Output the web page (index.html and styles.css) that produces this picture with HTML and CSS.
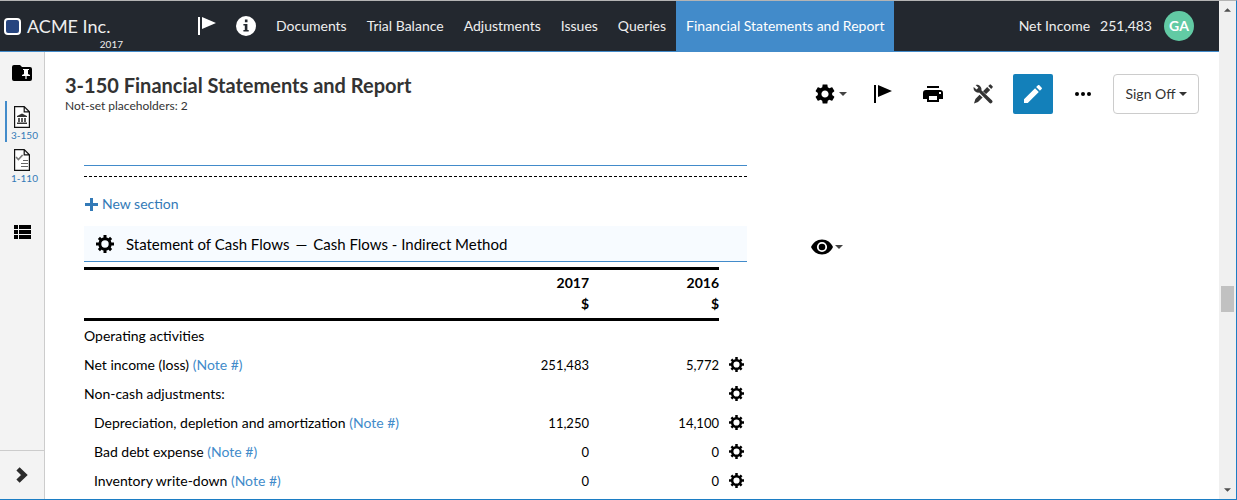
FILE: index.html
```html
<!DOCTYPE html>
<html lang="en">
<head>
<meta charset="utf-8">
<title>Financial Statements and Report</title>
<link rel="stylesheet" href="styles.css">
</head>
<body>
<svg class="defs" aria-hidden="true">
  <symbol id="cog" viewBox="0 0 18 18">
    <circle cx="9" cy="9" r="5.2" fill="none" stroke="currentColor" stroke-width="3"/>
    <path d="M9 0v4M9 14v4M0 9h4M14 9h4M2.9 2.9l2.6 2.6M12.5 12.5l2.6 2.6M15.1 2.9l-2.6 2.6M5.5 12.5l-2.6 2.6" stroke="currentColor" stroke-width="3"/>
  </symbol>
  <symbol id="flag" viewBox="0 0 18 18">
    <path d="M0 0h2v18H0zM4 0l14 6L4 12z" fill="currentColor"/>
  </symbol>
  <symbol id="caret" viewBox="0 0 8 4">
    <path d="M0 0h8L4 4z" fill="currentColor"/>
  </symbol>
</svg>
<div class="window">
  <div class="app">
    <header class="topbar">
      <a class="brand" href="#">
        <span class="brand-name"><span class="brand-mark"></span>ACME Inc.</span>
        <span class="brand-year">2017</span>
      </a>
      <button class="bar-icon" aria-label="Flag"><svg width="18" height="18"><use href="#flag"/></svg></button>
      <button class="bar-icon" aria-label="Information">
        <svg width="20" height="20" viewBox="0 0 20 20"><circle cx="10" cy="10" r="10" fill="#fff"/><path d="M8.9 3.6h2.6v2.6H8.9zM7.4 7.9h4v6.2h1.3v1.5H7.4v-1.5h1.4V9.4H7.4z" fill="#23282f"/></svg>
      </button>
      <nav class="tabs">
        <a href="#">Documents</a>
        <a href="#">Trial Balance</a>
        <a href="#">Adjustments</a>
        <a href="#">Issues</a>
        <a href="#">Queries</a>
        <a href="#" class="active" aria-current="page">Financial Statements and Report</a>
      </nav>
      <div class="income"><span>Net Income</span><span>251,483</span></div>
      <button class="avatar" aria-label="Account GA">GA</button>
    </header>

    <div class="body">
      <aside class="sidebar">
        <button class="side-icon" aria-label="Pinned documents">
          <svg width="20" height="16" viewBox="0 0 20 16"><path d="M2 0h6l2 2h8a2 2 0 0 1 2 2v10a2 2 0 0 1-2 2H2a2 2 0 0 1-2-2V2a2 2 0 0 1 2-2z" fill="#000"/><path d="M11 4h6v1h-1v4l2 1v1h-3.4v3h-1.2v-3H10v-1l2-1V5h-1z" fill="#fff"/></svg>
        </button>
        <a class="doc current" href="#">
          <svg width="16" height="22" viewBox="0 0 16 22"><path d="M.6.6h9.6l5.2 5.2v15.6H.6zM10.2.6v5.2h5.2" fill="#fff" stroke="#111" stroke-width="1.2"/><path d="M8 7.4l5 2.6v1H3v-1zM4.2 12h1.6v4H4.2zM7.2 12h1.6v4H7.2zM10.2 12h1.6v4h-1.6zM3 16.6h10v1.4H3z" fill="#333"/></svg>
          <span>3-150</span>
        </a>
        <a class="doc" href="#">
          <svg width="16" height="22" viewBox="0 0 16 22"><path d="M.6.6h9.6l5.2 5.2v15.6H.6zM10.2.6v5.2h5.2" fill="#fff" stroke="#111" stroke-width="1.2"/><path d="M2 8l2.4 2.6L8.600 6" fill="none" stroke="#777" stroke-width="1.6"/><path d="M9 11.500h5M7 14.500h7M7 17.500h7" stroke="#666" stroke-width="1.200"/></svg>
          <span>1-110</span>
        </a>
        <button class="side-icon list" aria-label="List">
          <svg width="17" height="14" viewBox="0 0 17 14"><path d="M0 0h4v4H0zM5 0h12v4H5zM0 5h4v4H0zM5 5h12v4H5zM0 10h4v4H0zM5 10h12v4H5z"/></svg>
        </button>
        <button class="expand" aria-label="Expand sidebar">
          <svg width="12" height="16" viewBox="0 0 12 16"><path d="M2 1.800L8.400 8 2 14.200" fill="none" stroke="#2b2b2b" stroke-width="4.600"/></svg>
        </button>
      </aside>

      <main class="main">
        <div class="head">
          <div class="titles">
            <h1>3-150 Financial Statements and Report</h1>
            <p>Not-set placeholders: 2</p>
          </div>
          <div class="tools">
            <button class="tool" aria-label="Settings">
              <svg width="24" height="24" viewBox="0 0 24 24"><path d="M19.140 12.940c.04-.3.06-.61.06-.94 0-.32-.02-.64-.07-.94l2.030-1.580c.18-.14.23-.41.12-.61l-1.920-3.320c-.12-.22-.37-.29-.59-.22l-2.390.96c-.5-.38-1.030-.7-1.620-.94l-.36-2.540c-.04-.24-.24-.41-.48-.41h-3.840c-.24 0-.43.17-.47.41l-.36 2.540c-.59.24-1.130.57-1.620.94l-2.390-.96c-.22-.08-.47 0-.59.22L2.740 8.870c-.12.21-.08.47.12.61l2.030 1.580c-.05.3-.09.63-.09.94s.02.64.07.94l-2.030 1.580c-.18.14-.23.41-.12.61l1.920 3.320c.12.22.37.29.59.22l2.390-.96c.5.38 1.030.7 1.620.94l.36 2.540c.05.24.24.41.48.41h3.840c.24 0 .44-.17.47-.41l.36-2.540c.59-.24 1.130-.56 1.620-.94l2.390.96c.22.08.47 0 .59-.22l1.920-3.320c.12-.22.07-.47-.12-.61l-2.010-1.580zM12 15.600c-1.980 0-3.600-1.620-3.600-3.600s1.620-3.600 3.600-3.600 3.600 1.620 3.600 3.600-1.620 3.600-3.600 3.600z"/></svg>
              <svg class="caret" width="8" height="4"><use href="#caret"/></svg>
            </button>
            <button class="tool" aria-label="Flag"><svg width="18" height="18"><use href="#flag"/></svg></button>
            <button class="tool" aria-label="Print">
              <svg width="20" height="16" viewBox="0 0 20 16"><path d="M4 0h12v2H4zM3 4h14a3 3 0 0 1 3 3v6h-4v3H4v-3H0V7a3 3 0 0 1 3-3zm3 6v4h8v-4zm10-4v2h2V6z" fill-rule="evenodd"/></svg>
            </button>
            <button class="tool" aria-label="Tools">
              <svg width="20" height="20" viewBox="0 0 20 20"><path d="M14.200 3l3 3L5 18l-4 1.600L2.400 15zM15.200 2l1.400-1.300a1 1 0 0 1 1.400 0l1.500 1.500a1 1 0 0 1 0 1.400L18.200 5z" fill="#333"/><path d="M4 5l14 13" stroke="#fff" stroke-width="5"/><path d="M2.600.9A4.600 4.600 0 0 1 8.400 6.200L18.900 16.200a1.600 1.600 0 0 1-2.600 2.600L6.200 8.500A4.600 4.600 0 0 1 .7 3L3.500 5.600 5.400 3.700z" fill="#333"/></svg>
            </button>
            <button class="tool primary" aria-label="Edit">
              <svg width="24" height="24" viewBox="0 0 24 24"><path d="M3 17.250V21h3.750L17.810 9.940l-3.750-3.750L3 17.250zM20.710 7.040c.39-.39.39-1.020 0-1.410l-2.340-2.340c-.39-.39-1.020-.39-1.410 0l-1.830 1.830 3.750 3.750 1.830-1.830z" fill="#fff"/></svg>
            </button>
            <button class="tool" aria-label="More">
              <svg width="16" height="4" viewBox="0 0 16 4"><circle cx="2" cy="2" r="2"/><circle cx="8" cy="2" r="2"/><circle cx="14" cy="2" r="2"/></svg>
            </button>
            <button class="signoff">Sign Off<svg width="8" height="4"><use href="#caret"/></svg></button>
          </div>
        </div>

        <div class="canvas">
          <article class="sheet">
            <div class="rule"></div>
            <div class="page-break"></div>
            <button class="new-section">
              <svg width="13" height="13" viewBox="0 0 13 13"><path d="M5 0h3v5h5v3H8v5H5V8H0V5h5z" fill="#337ab7"/></svg>New section
            </button>
            <div class="section-bar">
              <button class="gear" aria-label="Section settings"><svg width="18" height="18"><use href="#cog"/></svg></button>
              <h2><span>Statement of Cash Flows</span><span>—</span><span>Cash Flows - Indirect Method</span></h2>
            </div>
            <table>
              <thead>
                <tr><th class="label"></th><th>2017</th><th>2016</th><td class="action"></td></tr>
                <tr><th class="label"></th><th>$</th><th>$</th><td class="action"></td></tr>
              </thead>
              <tbody>
                <tr><td>Operating activities</td><td></td><td></td><td class="action"></td></tr>
                <tr><td>Net income (loss) <a href="#">(Note #)</a></td><td class="num">251,483</td><td class="num">5,772</td><td class="action"><button class="gear" aria-label="Row settings"><svg width="15" height="15"><use href="#cog"/></svg></button></td></tr>
                <tr><td>Non-cash adjustments:</td><td></td><td></td><td class="action"><button class="gear" aria-label="Row settings"><svg width="15" height="15"><use href="#cog"/></svg></button></td></tr>
                <tr><td class="sub">Depreciation, depletion and amortization <a href="#">(Note #)</a></td><td class="num">11,250</td><td class="num">14,100</td><td class="action"><button class="gear" aria-label="Row settings"><svg width="15" height="15"><use href="#cog"/></svg></button></td></tr>
                <tr><td class="sub">Bad debt expense <a href="#">(Note #)</a></td><td class="num">0</td><td class="num">0</td><td class="action"><button class="gear" aria-label="Row settings"><svg width="15" height="15"><use href="#cog"/></svg></button></td></tr>
                <tr><td class="sub">Inventory write-down <a href="#">(Note #)</a></td><td class="num">0</td><td class="num">0</td><td class="action"><button class="gear" aria-label="Row settings"><svg width="15" height="15"><use href="#cog"/></svg></button></td></tr>
              </tbody>
            </table>
          </article>
          <button class="visibility" aria-label="Visibility">
            <svg width="22" height="16" viewBox="0 0 22 16"><path d="M11 .5c5 0 9 3 11 7.500-2 4.500-6 7.500-11 7.500S2 12.500 0 8C2 3.500 6 .5 11 .5z"/><circle cx="11" cy="8" r="4.200" fill="none" stroke="#fff" stroke-width="1.800"/></svg>
            <svg class="caret" width="8" height="4"><use href="#caret"/></svg>
          </button>
        </div>
      </main>
    </div>
  </div>
  <div class="scrollbar" aria-hidden="true">
    <svg width="7" height="4" viewBox="0 0 8 4"><path d="M0 4h8L4 0z"/></svg>
    <div class="track"><div class="thumb"></div></div>
    <svg width="7" height="4" viewBox="0 0 8 4"><path d="M0 0h8L4 4z"/></svg>
  </div>
</div>
</body>
</html>
```
FILE: styles.css
```css
* {
  box-sizing: border-box;
}

body {
  margin: 0;
  font-family: Lato, "Liberation Sans", sans-serif;
  font-size: 14px;
  line-height: 20px;
  color: #333;
  background: #fff;
}

button {
  padding: 0;
  border: 0;
  background: none;
  font: inherit;
  color: inherit;
  cursor: pointer;
}

a {
  color: #428bca;
  text-decoration: none;
}

h1,
h2,
p {
  margin: 0;
}

svg {
  display: block;
  flex: none;
}

.defs {
  position: absolute;
  width: 0;
  height: 0;
}

.window {
  display: flex;
  height: 100vh;
  overflow: hidden;
  border-top: 1px solid #b4b4b4;
  border-right: 1px solid #1c7dc4;
  border-bottom: 1px solid #1c7dc4;
}

.app {
  flex: 1;
  min-width: 0;
  display: flex;
  flex-direction: column;
}

/* Top bar */
.topbar {
  flex: none;
  display: flex;
  align-items: center;
  height: 51px;
  padding-right: 25px;
  background: #23282f;
  border-bottom: 1px solid #428bca;
  color: #fff;
  white-space: nowrap;
}

.brand {
  width: 198px;
  padding: 12px 0 0 4px;
  color: #eee;
}

.brand-name {
  display: flex;
  align-items: center;
  gap: 6px;
  font-size: 18px;
  line-height: 24px;
}

.brand-mark {
  width: 17px;
  height: 17px;
  border: 2px solid #fff;
  border-radius: 4px;
  background: #27457f;
}

.brand-year {
  display: block;
  width: 119px;
  text-align: right;
  font-size: 10px;
  line-height: 12px;
}

.bar-icon {
  margin-right: 20px;
}

.tabs {
  flex: 1;
  align-self: stretch;
  display: flex;
  margin-left: -10px;
}

.tabs a {
  display: flex;
  align-items: center;
  padding: 0 10px;
  color: #eee;
}

.tabs .active {
  background: #428bca;
  color: #fff;
}

.income {
  display: flex;
  gap: 10px;
  margin-right: 12px;
  color: #eee;
}

.avatar {
  width: 30px;
  height: 30px;
  border-radius: 50%;
  background: #62caa4;
  color: #fff;
  font-weight: 700;
}

/* Sidebar */
.body {
  flex: 1;
  min-height: 0;
  display: flex;
}

.sidebar {
  flex: none;
  width: 45px;
  display: flex;
  flex-direction: column;
  padding-top: 13px;
  background: #f3f3f3;
  border-right: 1px solid #ccc;
}

.side-icon {
  align-self: center;
  margin-bottom: 20px;
}

.doc {
  display: flex;
  flex-direction: column;
  align-items: center;
  height: 41px;
  margin: 0 0 2px 5px;
  padding: 5px 6px 0 0;
  border-left: 2px solid transparent;
  font-size: 10px;
  line-height: 14px;
  color: #337ab7;
}

.doc svg {
  margin-right: 2px;
}

.doc span {
  margin-right: -4px;
}

.doc.current {
  border-left-color: #428bca;
}

.list {
  margin-top: 38px;
}

.expand {
  display: flex;
  align-items: center;
  justify-content: center;
  height: 49px;
  margin-top: auto;
  border-top: 1px solid #ccc;
}

/* Page header */
.main {
  flex: 1;
  min-width: 0;
}

.head {
  display: flex;
  align-items: flex-start;
  justify-content: space-between;
  padding: 22px 20px 0;
}

.titles h1 {
  font-size: 20px;
  line-height: 22px;
}

.titles p {
  font-size: 12px;
  line-height: 20px;
}

.tools {
  display: flex;
  gap: 10px;
  color: #000;
}

.tool {
  display: flex;
  align-items: center;
  justify-content: center;
  min-width: 40px;
  height: 40px;
}

.tool:first-child {
  justify-content: flex-end;
  min-width: 44px;
  padding-right: 6px;
}

.primary {
  border-radius: 2px;
  background: #1380ba;
}

.tool .caret,
.visibility .caret {
  margin-left: 2px;
  color: #444;
}

.signoff {
  display: flex;
  align-items: center;
  justify-content: center;
  gap: 3px;
  width: 86px;
  border: 1px solid #ccc;
  border-radius: 4px;
  color: #333;
}

/* Document */
.canvas {
  display: flex;
  align-items: flex-start;
  gap: 64px;
  padding: 49px 20px 0 39px;
}

.sheet {
  flex: 0 1 663px;
  color: #000;
}

.rule {
  height: 1px;
  background: #428bca;
}

.page-break {
  margin-top: 10px;
  border-top: 1px dashed #000;
}

.new-section {
  display: flex;
  align-items: center;
  gap: 4px;
  margin: 17px 0 12px 1px;
  color: #337ab7;
}

.section-bar {
  display: flex;
  align-items: center;
  gap: 12px;
  height: 36px;
  margin-bottom: 5px;
  padding-left: 12px;
  background: #f7fbff;
  border-bottom: 1px solid #428bca;
}

.section-bar h2 {
  display: flex;
  gap: 6px;
  font-size: 15px;
  font-weight: 400;
}

table {
  width: 100%;
  table-layout: fixed;
  border-collapse: separate;
  border-spacing: 0;
}

th,
td {
  padding: 0;
  height: 29px;
  text-align: left;
}

thead th {
  width: 130px;
  height: 27px;
  text-align: right;
  vertical-align: top;
}

thead tr:first-child th {
  padding-top: 3px;
  border-top: 3px solid #000;
}

thead tr:last-child th {
  border-bottom: 3px solid #000;
}

thead .label {
  width: auto;
}

thead .action {
  height: 27px;
}

.action {
  width: 28px;
  padding-left: 10px;
}

.num {
  text-align: right;
  font-size: 13px;
}

.sub {
  padding-left: 10px;
}

.gear {
  display: block;
  color: #000;
}

.visibility {
  display: flex;
  align-items: center;
  margin-top: 74px;
}

/* Scrollbar */
.scrollbar {
  flex: none;
  width: 17px;
  display: flex;
  flex-direction: column;
  align-items: center;
  padding: 7px 0;
  background: #f0f0f0;
  fill: #505050;
}

.track {
  flex: 1;
  padding-top: 274px;
}

.thumb {
  width: 13px;
  height: 26px;
  background: #c1c1c1;
}
```
